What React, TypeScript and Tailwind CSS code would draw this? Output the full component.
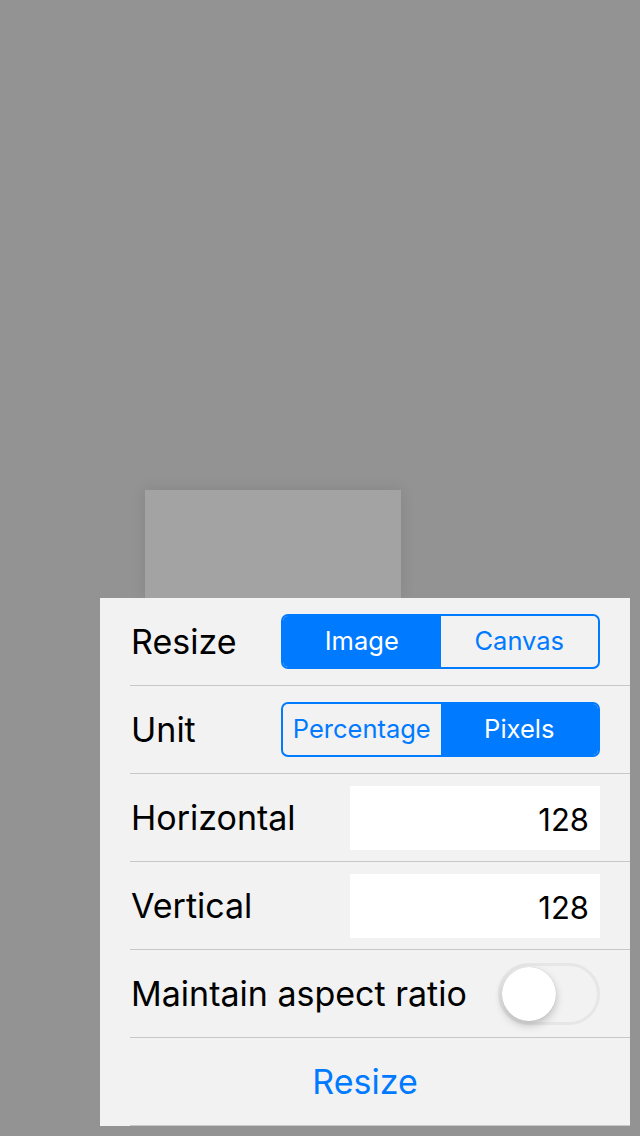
import React from 'react';

const font = { fontFamily: 'Inter, "Noto Sans", sans-serif' };

interface SegmentProps {
    options: string[];
    selected: number;
}

const Segmented: React.FC<SegmentProps> = ({ options, selected }) => (
    <div className="flex w-[319px] h-[55px] border-2 border-[#007aff] rounded-[7px] overflow-hidden">
        {options.map((opt, i) => (
            <div
                key={opt}
                className={
                    i === selected
                        ? 'flex-1 flex items-center justify-center bg-[#007aff] text-white text-[25.5px]'
                        : 'flex-1 flex items-center justify-center text-[#007aff] text-[25.5px]'
                }
            >
                {opt}
            </div>
        ))}
    </div>
);

const Row: React.FC<{ label: string; children: React.ReactNode }> = ({ label, children }) => (
    <div className="ml-[30px] h-[88px] pr-[30px] flex items-center justify-between border-b border-[#c8c7cc]">
        <span className="pl-px text-[34px] text-black">{label}</span>
        {children}
    </div>
);

const NumberField: React.FC<{ value: string }> = ({ value }) => (
    <div className="w-[250px] h-[64px] bg-white flex items-center justify-end pr-[11px] pt-[6px] text-[31px] text-black">
        {value}
    </div>
);

export default function App() {
    return (
        <div className="w-[640px] h-[1136px] bg-[#939393] overflow-hidden pt-[490px] pl-[100px]" style={font}>
            <div className="ml-[45px] w-[256px] h-[108px] bg-[#a3a3a3] shadow-[0_0_14px_rgba(0,0,0,0.1)]"></div>
            <div className="w-[530px] bg-[#f2f2f2]">
                <Row label="Resize">
                    <Segmented options={['Image', 'Canvas']} selected={0} />
                </Row>
                <Row label="Unit">
                    <Segmented options={['Percentage', 'Pixels']} selected={1} />
                </Row>
                <Row label="Horizontal">
                    <NumberField value="128" />
                </Row>
                <Row label="Vertical">
                    <NumberField value="128" />
                </Row>
                <Row label="Maintain aspect ratio">
                    <div className="w-[102px] h-[62px] rounded-full border-[3px] border-[#e6e6e6] flex items-center pl-px">
                        <div className="w-[54px] h-[54px] rounded-full bg-white shadow-[0_4px_8px_rgba(0,0,0,0.22),0_0_1px_rgba(0,0,0,0.2)]"></div>
                    </div>
                </Row>
                <div className="ml-[30px] h-[88px] pr-[30px] flex items-center justify-center border-b border-[#c8c7cc] text-[34px] text-[#007aff]">
                    Resize
                </div>
            </div>
        </div>
    );
}
